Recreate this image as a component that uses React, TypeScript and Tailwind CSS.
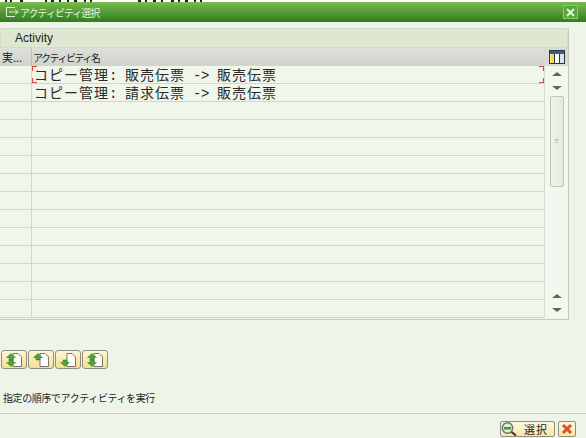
const cjk = { fontFamily: '"Noto Sans CJK JP", "Liberation Sans", sans-serif' };

const Arrow = ({ x, y, up }: { x: number; y: number; up: boolean }) => (
  <path
    d={
      up
        ? `M${x} ${y - 3}l4.5 4h-2.5v2.5h-4v-2.5h-2.5z`
        : `M${x} ${y + 3}l4.5 -4h-2.5v-2.5h-4v2.5h-2.5z`
    }
    fill="#4aa636"
    stroke="#2f7a22"
    strokeWidth="0.5"
  />
);

const MoveButton = ({ top, bottom }: { top: boolean; bottom: boolean }) => (
  <button className="flex h-[19px] w-[26px] items-center justify-center rounded-[3px] border border-[#8f8f7c] bg-gradient-to-b from-[#fdf6d6] to-[#f7dd8f]">
    <svg width="20" height="16" viewBox="0 0 20 16">
      <path d="M9 1.5h5l3.5 3.5v9.5H9z" fill="#fff" stroke="#555" strokeWidth="0.8" />
      {top && <Arrow x={7} y={4.5} up />}
      {bottom && <Arrow x={7} y={11.5} up={false} />}
    </svg>
  </button>
);

// half width chars sit in a mono cell, wide chars get extra spacing
const RowText = ({ parts }: { parts: string[] }) => (
  <>
    {parts.map((p, i) =>
      i % 2 === 0 ? (
        <span key={i} className="inline-block tracking-[1px]">{p}</span>
      ) : (
        <span key={i} className="inline-block tracking-[-0.4px]" style={{ fontFamily: '"Liberation Mono", monospace' }}>{p}</span>
      ),
    )}
  </>
);

const rows: string[][] = [
  ["コピー管理", ": ", "販売伝票", " -> ", "販売伝票"],
  ["コピー管理", ": ", "請求伝票", " -> ", "販売伝票"],
  [], [], [], [], [], [], [], [], [], [], [], [],
];

// bottoms of the clipped menu text above the window: [width, gap after]
const ticks = [
  [2, 3], [2, 8], [3, 22], [2, 4], [3, 5], [2, 6], [2, 5], [3, 7], [2, 4], [2, 46],
  [3, 4], [2, 6], [3, 5], [2, 8], [3, 4], [2, 5], [3, 6], [2, 4], [2, 0],
];

const Corner = ({ className }: { className: string }) => (
  <span className={`absolute h-[5px] w-[5px] border-[#e0403a] ${className}`} />
);

export default function App() {
  return (
    <div className="flex h-[438px] w-[586px] flex-col overflow-hidden bg-[#eff4e9] text-[#1c1c1c]" style={cjk}>
      <div className="flex h-[2px] items-start bg-white pl-[5px]">
        {ticks.map(([w, gap], i) => (
          <span key={i} className="h-[2px] shrink-0 bg-[#222]" style={{ width: w, marginRight: gap }} />
        ))}
      </div>

      {/* title bar */}
      <div className="flex h-[20px] items-center justify-between bg-gradient-to-b from-[#78bb4e] to-[#2f7d1e] pl-[5px] pr-[8px]">
        <div className="flex items-center gap-[1px]">
          <svg width="14" height="12" viewBox="0 0 14 12" fill="none" stroke="#dfeed6" strokeWidth="1">
            <path d="M10 1.5H1.5v9H10M4 6h9M10 3.5 13 6l-3 2.5" />
          </svg>
          <span className="text-[10px] tracking-[-1px] text-[#e8f3df]">アクティビティ選択</span>
        </div>
        <div className="flex h-[14px] w-[15px] items-center justify-center border border-[#8fca6d] bg-[#55a637]">
          <svg width="9" height="9" viewBox="0 0 9 9">
            <path d="M1 1l7 7M8 1L1 8" stroke="#e6f4dc" strokeWidth="2" />
          </svg>
        </div>
      </div>

      {/* table panel */}
      <div className="mt-[6px] w-[569px] border-r border-b border-[#c2ccb6] pb-[1px]">
        <div className="flex h-[20px] items-center border border-[#d3dcc8] bg-[#dde7d2] pl-[14px] text-[12px]" style={{ fontFamily: '"Liberation Sans", sans-serif' }}>
          Activity
        </div>
        <div className="flex">
          <div className="min-w-0 flex-1">
            <div className="flex h-[18px] items-center bg-gradient-to-b from-[#dde0da] to-[#d0d4cc] text-[10px]">
              <div className="flex h-full w-[32px] shrink-0 items-center border-r border-[#b9c2ae] pl-[2px] text-[11px]">実...</div>
              <div className="pl-[1px] tracking-[-1.5px]">アクティビティ名</div>
            </div>
            {rows.map((parts, i) => (
              <div key={i} className="flex h-[18px] border-b border-[#cfd9c4] bg-[#f1f6ea]">
                <div className="w-[32px] shrink-0 border-r border-[#cfd9c4]" />
                <div className="relative flex-1 whitespace-pre pl-[2px] text-[14px] leading-[17px] text-[#2a2a2a]">
                  <RowText parts={parts} />
                  {i === 0 && (
                    <>
                      <Corner className="left-0 top-0 border-l border-t" />
                      <Corner className="bottom-0 left-0 border-b border-l" />
                      <Corner className="right-0 top-0 border-r border-t" />
                      <Corner className="bottom-0 right-0 border-b border-r" />
                    </>
                  )}
                </div>
              </div>
            ))}
          </div>

          {/* scrollbar */}
          <div className="flex w-[24px] shrink-0 flex-col items-center border-l border-[#d3dcc8]">
            <div className="flex h-[18px] w-full items-center justify-center bg-[#d8dbd4]">
              <svg width="16" height="14" viewBox="0 0 16 14">
                <rect x="0.5" y="0.5" width="15" height="13" fill="#fff" stroke="#2b3a44" />
                <rect x="1" y="1" width="14" height="3" fill="#2f5f8a" />
                <rect x="1.5" y="4" width="4" height="9" fill="#f5d93a" />
                <path d="M5.5 4v9M10.5 4v9" stroke="#2b3a44" />
                <rect x="11" y="4" width="4" height="9" fill="#dfe3e8" />
              </svg>
            </div>
            <div className="flex w-full flex-1 flex-col items-center bg-[#f4f7ef]">
              <div className="mt-[6px] h-0 w-0 border-x-[5px] border-b-[4px] border-x-transparent border-b-[#5d6a58]" />
              <div className="mt-[10px] h-0 w-0 border-x-[5px] border-t-[4px] border-x-transparent border-t-[#5d6a58]" />
              <div className="mt-[6px] flex h-[91px] w-[14px] items-center justify-center rounded-[2px] border border-[#bcc6b0] bg-gradient-to-r from-[#f0f4ea] to-[#e4ebdb] text-[7px] leading-none text-[#aab5a0]">
                ⠿
              </div>
              <div className="flex-1" />
              <div className="h-0 w-0 border-x-[5px] border-b-[4px] border-x-transparent border-b-[#5d6a58]" />
              <div className="mb-[6px] mt-[10px] h-0 w-0 border-x-[5px] border-t-[4px] border-x-transparent border-t-[#5d6a58]" />
            </div>
          </div>
        </div>
      </div>

      {/* reorder buttons */}
      <div className="mt-[30px] flex gap-[1px] pl-[1px]">
        <MoveButton top bottom />
        <MoveButton top bottom={false} />
        <MoveButton top={false} bottom />
        <MoveButton top bottom />
      </div>

      <div className="mt-[22px] pl-[3px] text-[10px] leading-[14px] tracking-[-0.4px]">指定の順序でアクティビティを実行</div>

      {/* footer */}
      <div className="mt-[8px] flex flex-1 items-start justify-end gap-[3px] border-t border-[#c8d2bc] pr-[10px] pt-[7px]">
        <button className="flex h-[16px] w-[55px] items-center gap-[7px] rounded-[2px] border border-[#8f8f7c] bg-gradient-to-b from-[#fdf8e0] to-[#f8e6a8] text-[11px] tracking-[1px]">
          <svg width="16" height="14" viewBox="0 0 16 14" fill="none">
            <circle cx="6.5" cy="6" r="5.2" fill="#dfeedd" stroke="#6a7a6a" strokeWidth="1.5" />
            <rect x="3" y="5" width="7" height="2.5" fill="#3f9a2c" />
            <path d="M10.5 10l4.5 3.5" stroke="#3a3a3a" strokeWidth="2.2" />
          </svg>
          選択
        </button>
        <button className="flex h-[16px] w-[18px] items-center justify-center rounded-[2px] border border-[#8f8f7c] bg-gradient-to-b from-[#fdf8e0] to-[#f8e6a8]">
          <svg width="12" height="12" viewBox="0 0 12 12">
            <path d="M2 2l8 8M10 2l-8 8" stroke="#d8542a" strokeWidth="3" />
          </svg>
        </button>
      </div>
    </div>
  );
}
